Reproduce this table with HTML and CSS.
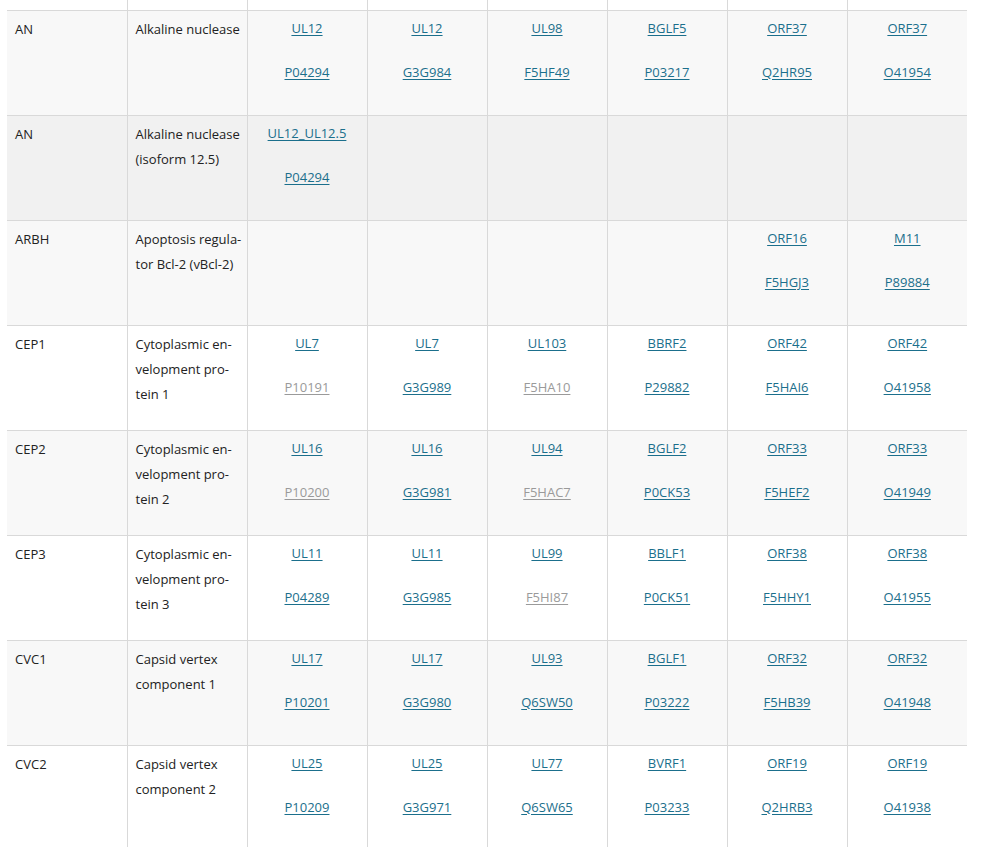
FILE: index.html
```html
<!DOCTYPE html>
<html lang="en">
<head>
<meta charset="utf-8">
<title>Core proteins</title>
<link rel="stylesheet" href="styles.css">
</head>
<body>
<table class="grid">
  <colgroup>
    <col><col><col><col><col><col><col><col>
  </colgroup>
  <tbody>
    <tr class="partial">
      <td></td><td></td><td></td><td></td><td></td><td></td><td></td><td></td>
    </tr>
    <tr class="alt">
      <td>AN</td>
      <td class="desc">Alkaline nuclease</td>
      <td class="ids"><div><a href="#">UL12</a></div><div><a href="#">P04294</a></div></td>
      <td class="ids"><div><a href="#">UL12</a></div><div><a href="#">G3G984</a></div></td>
      <td class="ids"><div><a href="#">UL98</a></div><div><a href="#">F5HF49</a></div></td>
      <td class="ids"><div><a href="#">BGLF5</a></div><div><a href="#">P03217</a></div></td>
      <td class="ids"><div><a href="#">ORF37</a></div><div><a href="#">Q2HR95</a></div></td>
      <td class="ids"><div><a href="#">ORF37</a></div><div><a href="#">O41954</a></div></td>
    </tr>
    <tr class="hover">
      <td>AN</td>
      <td class="desc">Alkaline nuclease<br>(isoform 12.5)</td>
      <td class="ids"><div><a href="#">UL12_UL12.5</a></div><div><a href="#">P04294</a></div></td>
      <td class="ids"></td>
      <td class="ids"></td>
      <td class="ids"></td>
      <td class="ids"></td>
      <td class="ids"></td>
    </tr>
    <tr class="alt">
      <td>ARBH</td>
      <td class="desc">Apoptosis regula-<br>tor Bcl-2 (vBcl-2)</td>
      <td class="ids"></td>
      <td class="ids"></td>
      <td class="ids"></td>
      <td class="ids"></td>
      <td class="ids"><div><a href="#">ORF16</a></div><div><a href="#">F5HGJ3</a></div></td>
      <td class="ids"><div><a href="#">M11</a></div><div><a href="#">P89884</a></div></td>
    </tr>
    <tr>
      <td>CEP1</td>
      <td class="desc">Cytoplasmic en-<br>velopment pro-<br>tein 1</td>
      <td class="ids"><div><a href="#">UL7</a></div><div><a class="muted" href="#">P10191</a></div></td>
      <td class="ids"><div><a href="#">UL7</a></div><div><a href="#">G3G989</a></div></td>
      <td class="ids"><div><a href="#">UL103</a></div><div><a class="muted" href="#">F5HA10</a></div></td>
      <td class="ids"><div><a href="#">BBRF2</a></div><div><a href="#">P29882</a></div></td>
      <td class="ids"><div><a href="#">ORF42</a></div><div><a href="#">F5HAI6</a></div></td>
      <td class="ids"><div><a href="#">ORF42</a></div><div><a href="#">O41958</a></div></td>
    </tr>
    <tr class="alt">
      <td>CEP2</td>
      <td class="desc">Cytoplasmic en-<br>velopment pro-<br>tein 2</td>
      <td class="ids"><div><a href="#">UL16</a></div><div><a class="muted" href="#">P10200</a></div></td>
      <td class="ids"><div><a href="#">UL16</a></div><div><a href="#">G3G981</a></div></td>
      <td class="ids"><div><a href="#">UL94</a></div><div><a class="muted" href="#">F5HAC7</a></div></td>
      <td class="ids"><div><a href="#">BGLF2</a></div><div><a href="#">P0CK53</a></div></td>
      <td class="ids"><div><a href="#">ORF33</a></div><div><a href="#">F5HEF2</a></div></td>
      <td class="ids"><div><a href="#">ORF33</a></div><div><a href="#">O41949</a></div></td>
    </tr>
    <tr>
      <td>CEP3</td>
      <td class="desc">Cytoplasmic en-<br>velopment pro-<br>tein 3</td>
      <td class="ids"><div><a href="#">UL11</a></div><div><a href="#">P04289</a></div></td>
      <td class="ids"><div><a href="#">UL11</a></div><div><a href="#">G3G985</a></div></td>
      <td class="ids"><div><a href="#">UL99</a></div><div><a class="muted" href="#">F5HI87</a></div></td>
      <td class="ids"><div><a href="#">BBLF1</a></div><div><a href="#">P0CK51</a></div></td>
      <td class="ids"><div><a href="#">ORF38</a></div><div><a href="#">F5HHY1</a></div></td>
      <td class="ids"><div><a href="#">ORF38</a></div><div><a href="#">O41955</a></div></td>
    </tr>
    <tr class="alt">
      <td>CVC1</td>
      <td class="desc">Capsid vertex<br>component 1</td>
      <td class="ids"><div><a href="#">UL17</a></div><div><a href="#">P10201</a></div></td>
      <td class="ids"><div><a href="#">UL17</a></div><div><a href="#">G3G980</a></div></td>
      <td class="ids"><div><a href="#">UL93</a></div><div><a href="#">Q6SW50</a></div></td>
      <td class="ids"><div><a href="#">BGLF1</a></div><div><a href="#">P03222</a></div></td>
      <td class="ids"><div><a href="#">ORF32</a></div><div><a href="#">F5HB39</a></div></td>
      <td class="ids"><div><a href="#">ORF32</a></div><div><a href="#">O41948</a></div></td>
    </tr>
    <tr>
      <td>CVC2</td>
      <td class="desc">Capsid vertex<br>component 2</td>
      <td class="ids"><div><a href="#">UL25</a></div><div><a href="#">P10209</a></div></td>
      <td class="ids"><div><a href="#">UL25</a></div><div><a href="#">G3G971</a></div></td>
      <td class="ids"><div><a href="#">UL77</a></div><div><a href="#">Q6SW65</a></div></td>
      <td class="ids"><div><a href="#">BVRF1</a></div><div><a href="#">P03233</a></div></td>
      <td class="ids"><div><a href="#">ORF19</a></div><div><a href="#">Q2HRB3</a></div></td>
      <td class="ids"><div><a href="#">ORF19</a></div><div><a href="#">O41938</a></div></td>
    </tr>
  </tbody>
</table>
</body>
</html>
```

FILE: styles.css
```css
html, body {
  margin: 0;
  padding: 0;
  background: #ffffff;
}

body {
  font-family: "Open Sans", "Liberation Sans", sans-serif;
  font-size: 13px;
  color: #222222;
}

.grid {
  margin-left: 7px;
  width: 960px;
  table-layout: fixed;
  border-collapse: collapse;
  border-spacing: 0;
}

.grid col {
  width: 120px;
}

.grid td {
  height: 105px;
  box-sizing: border-box;
  padding: 6px 8px 0 8px;
  vertical-align: top;
  line-height: 25px;
  border-bottom: 1px solid #d9d9d9;
  border-left: 1px solid #d9d9d9;
  overflow: hidden;
}

.grid td:first-child {
  border-left: none;
}

.grid td.desc {
  white-space: nowrap;
  padding-right: 0;
}

.grid tr.partial td {
  height: 10px;
  padding: 0;
}

.grid tr.alt td {
  background: #f8f8f8;
}

.grid tr.hover td {
  background: #f1f1f1;
}

.grid td.ids {
  text-align: center;
  padding-top: 5px;
  padding-left: 2px;
  padding-right: 2px;
}

.grid td.ids div + div {
  margin-top: 19px;
}

.grid a {
  color: #1b6f8c;
  text-decoration: underline;
  text-underline-offset: 2px;
}

.grid a.muted {
  color: #9a9a9a;
}
```
